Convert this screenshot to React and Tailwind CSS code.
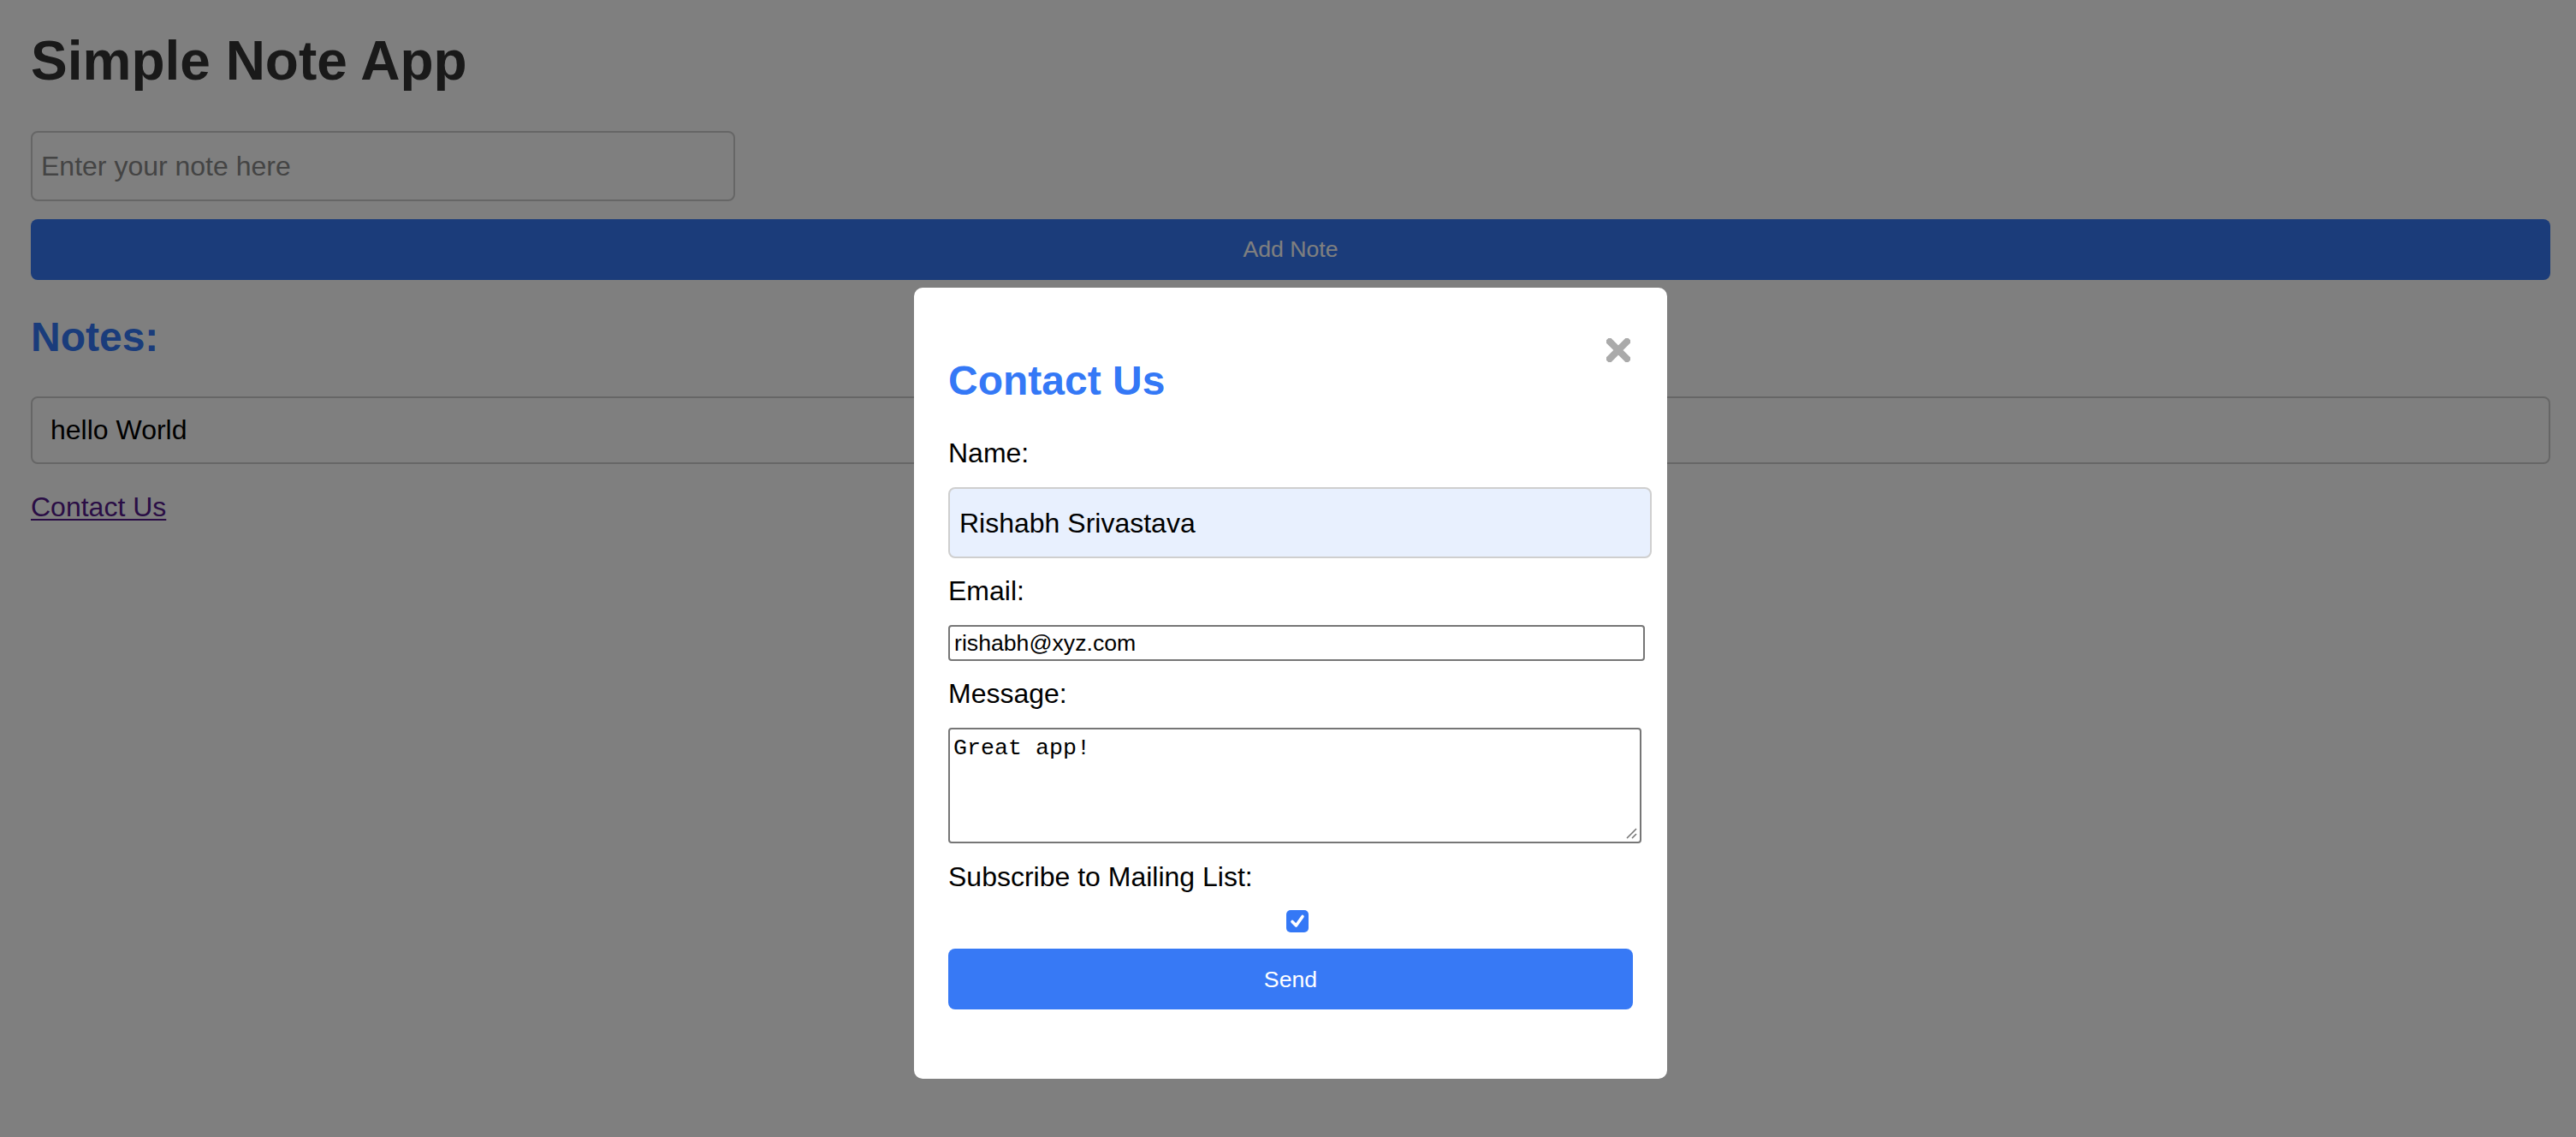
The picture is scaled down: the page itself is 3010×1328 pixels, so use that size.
import React from "react";

const SANS = { fontFamily: '"Liberation Sans", Arial, Helvetica, sans-serif' };

export default function App() {
  return (
    <div className="relative min-h-screen w-full bg-white" style={SANS}>
      {/* Page */}
      <div className="flex flex-col pl-[36px] pr-[30px] pt-[34px]">
        <h1 className="m-0 text-[64px] font-bold leading-[74px] text-[#333]">Simple Note App</h1>
        <input
          type="text"
          placeholder="Enter your note here"
          className="mt-[45px] box-border h-[82px] w-[823px] rounded-[8px] border-2 border-[#ccc] bg-white px-[10px] text-[32px] text-black outline-none placeholder:text-[#888]"
          style={SANS}
        />
        <button
          className="mt-[21px] flex h-[71px] w-full items-center justify-center rounded-[8px] bg-[#3779f5] pb-[2px] text-[26.67px] text-white"
          style={SANS}
        >
          Add Note
        </button>
        <h2 className="m-0 mt-[39px] text-[48px] font-bold leading-[55px] text-[#3478f6]">Notes:</h2>
        <div className="mt-[42px] box-border flex h-[79px] w-full items-center rounded-[8px] border-2 border-[#ccc] px-[21px] text-[32px] leading-[37px] text-black">
          hello World
        </div>
        <div className="mt-[32px] text-[32px] leading-[37px]">
          <a href="#" className="text-[#551a8b] underline decoration-2 underline-offset-[3px]">
            Contact Us
          </a>
        </div>
      </div>

      {/* Overlay */}
      <div className="fixed inset-0 bg-black/50" />

      {/* Modal */}
      <div className="absolute left-[1068px] top-[336px] box-border flex w-[880px] flex-col rounded-[10px] bg-white px-[40px] pb-[81px] pt-[81px]">
        <button className="absolute right-[43px] top-[59px] flex h-[28px] w-[28px] items-center justify-center p-0">
          <svg width="28" height="28" viewBox="0 0 28 28">
            <path d="M4 4 L24 24 M24 4 L4 24" stroke="#aaaaaa" strokeWidth="8" strokeLinecap="square" />
          </svg>
        </button>
        <h2 className="m-0 text-[48px] font-bold leading-[55px] text-[#3478f6]">Contact Us</h2>
        <label className="mt-[39px] text-[32px] leading-[37px] text-black">Name:</label>
        <div className="mt-[21px] box-border flex h-[83px] w-[822px] items-center rounded-[8px] border-2 border-[#cfcfcf] bg-[#e8f0fe] px-[11px] text-[32px] text-black">
          Rishabh Srivastava
        </div>
        <label className="mt-[20px] text-[32px] leading-[37px] text-black">Email:</label>
        <div className="mt-[21px] box-border flex h-[42px] w-[814px] items-center rounded-[4px] border-2 border-[#767676] bg-white px-[5px] text-[26.67px] text-black">
          rishabh@xyz.com
        </div>
        <label className="mt-[20px] text-[32px] leading-[37px] text-black">Message:</label>
        <div
          className="relative mt-[21px] box-border h-[135px] w-[810px] rounded-[4px] border-2 border-[#767676] bg-white px-[4px] pt-[6px] text-[26.67px] leading-[32px] text-black"
          style={{ fontFamily: '"Liberation Mono", "Courier New", monospace' }}
        >
          Great app!
          <svg className="absolute bottom-[3px] right-[3px]" width="14" height="14" viewBox="0 0 14 14">
            <path d="M2 13 L13 2 M8 13 L13 8" stroke="#777" strokeWidth="1.6" />
          </svg>
        </div>
        <label className="mt-[21px] text-[32px] leading-[37px] text-black">Subscribe to Mailing List:</label>
        <div className="mt-[20px] flex justify-center pl-[16px]">
          <span className="flex h-[26px] w-[26px] items-center justify-center rounded-[5px] bg-[#3478f6]">
            <svg width="22" height="22" viewBox="0 0 22 22">
              <path d="M5 11.5 L9.5 16 L17 5.5" fill="none" stroke="white" strokeWidth="3.6" strokeLinecap="round" strokeLinejoin="round" />
            </svg>
          </span>
        </div>
        <button
          className="mt-[19px] flex h-[71px] w-full items-center justify-center rounded-[8px] bg-[#3779f5] text-[26.67px] text-white"
          style={SANS}
        >
          Send
        </button>
      </div>
    </div>
  );
}
